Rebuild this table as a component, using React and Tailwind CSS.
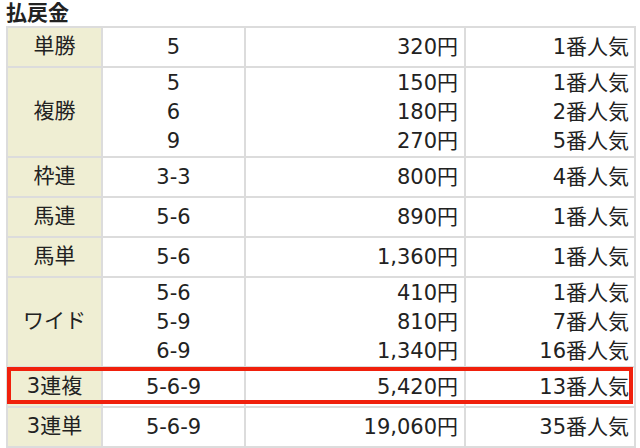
const rows = [
  { label: '単勝', items: [['5', '320円', '1番人気']] },
  {
    label: '複勝',
    items: [
      ['5', '150円', '1番人気'],
      ['6', '180円', '2番人気'],
      ['9', '270円', '5番人気'],
    ],
  },
  { label: '枠連', items: [['3-3', '800円', '4番人気']] },
  { label: '馬連', items: [['5-6', '890円', '1番人気']] },
  { label: '馬単', items: [['5-6', '1,360円', '1番人気']] },
  {
    label: 'ワイド',
    items: [
      ['5-6', '410円', '1番人気'],
      ['5-9', '810円', '7番人気'],
      ['6-9', '1,340円', '16番人気'],
    ],
  },
  { label: '3連複', items: [['5-6-9', '5,420円', '13番人気']] },
  { label: '3連単', items: [['5-6-9', '19,060円', '35番人気']] },
];

const Cell = ({ lines, className }) => (
  <td className={`border-2 border-[#dcdcdc] align-middle ${className}`}>
    {lines.map((l, i) => (
      <div key={i} className="leading-[29px]">
        {l}
      </div>
    ))}
  </td>
);

export default function App() {
  return (
    <div
      className="w-[640px] h-[448px] bg-white text-[#222] overflow-hidden"
      style={{ fontFamily: '"DejaVu Sans", "Noto Sans CJK JP", sans-serif' }}
    >
      <h2 className="pl-[6px] h-[26px] leading-[26px] text-[21px] font-bold">払戻金</h2>
      <div className="relative ml-[6px] w-[628px]">
        <table className="w-[628px] table-fixed border-collapse text-[21px]">
          <colgroup>
            <col className="w-[95px]" />
            <col className="w-[143px]" />
            <col className="w-[220px]" />
            <col className="w-[170px]" />
          </colgroup>
          <tbody>
            {rows.map((r) => {
              const multi = r.items.length > 1;
              return (
                <tr key={r.label} className={multi ? 'h-[90px]' : 'h-[40px]'}>
                  <td className="border-2 border-[#dcdcdc] bg-[#efeed3] text-center align-middle">
                    {r.label}
                  </td>
                  <Cell lines={r.items.map((x) => x[0])} className="text-center" />
                  <Cell lines={r.items.map((x) => x[1])} className="text-right pr-[6px]" />
                  <Cell lines={r.items.map((x) => x[2])} className="text-right pr-[5px]" />
                </tr>
              );
            })}
          </tbody>
        </table>
        <div className="absolute left-[1px] top-[341px] w-[626px] h-[37px] border-4 border-[#f0200c]" />
      </div>
    </div>
  );
}
